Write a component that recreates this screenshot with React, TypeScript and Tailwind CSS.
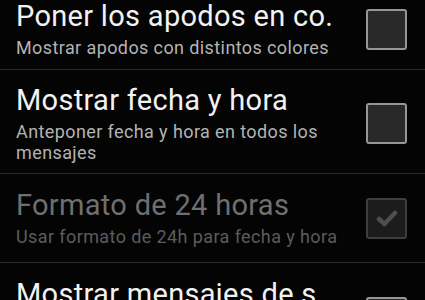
import React from "react";

type Row = {
  title: string;
  subtitle: string;
  disabled?: boolean;
  checked?: boolean;
  rowClass: string;
};

const rows: Row[] = [
  {
    title: "Poner los apodos en co.",
    subtitle: "Mostrar apodos con distintos colores",
    rowClass: "pt-0 pb-[11px]",
  },
  {
    title: "Mostrar fecha y hora",
    subtitle: "Anteponer fecha y hora en todos los mensajes",
    rowClass: "pt-[14px] pb-[10px]",
  },
  {
    title: "Formato de 24 horas",
    subtitle: "Usar formato de 24h para fecha y hora",
    disabled: true,
    checked: true,
    rowClass: "pt-[15px] pb-[15px]",
  },
  {
    title: "Mostrar mensajes de s.",
    subtitle: "Mostrar mensajes del sistema como entradas y salidas",
    rowClass: "pt-[15px] pb-[15px]",
  },
];

function Checkbox({ disabled, checked }: { disabled?: boolean; checked?: boolean }) {
  return (
    <div
      className={
        "w-[41px] h-[41px] shrink-0 rounded-[3px] border-2 flex items-center justify-center " +
        (disabled
          ? "border-[#3e3e3e] bg-[#1c1c1c]"
          : "border-[#969696] bg-[#292929]")
      }
    >
      {checked && (
        <svg width="26" height="26" viewBox="0 0 26 26">
          <path
            d="M5 14 L10.5 19 L21 8"
            fill="none"
            stroke="#4e4e4e"
            strokeWidth="4.5"
            strokeLinecap="round"
            strokeLinejoin="round"
          />
        </svg>
      )}
    </div>
  );
}

export default function App() {
  return (
    <div
      className="w-[425px] h-[300px] overflow-hidden bg-[#040404]"
      style={{ fontFamily: "Roboto, 'Noto Sans', sans-serif" }}
    >
      {rows.map((r, i) => (
        <div key={i} className={i > 0 ? "border-t border-[#2a2a2a]" : ""}>
          <div className={"flex items-center pl-[16px] pr-[18px] " + r.rowClass}>
            <div className="flex-1 min-w-0 pr-[14px]">
              <div
                className={
                  "text-[29px] leading-[32px] tracking-[0.3px] whitespace-nowrap " +
                  (r.disabled ? "text-[#6f6f6f]" : "text-[#f2f2f2]")
                }
              >
                {r.title}
              </div>
              <div
                className={
                  "mt-[5px] text-[18px] leading-[21px] tracking-[0.4px] " +
                  (r.disabled ? "text-[#5c5c5c]" : "text-[#b3b3b3]")
                }
              >
                {r.subtitle}
              </div>
            </div>
            <Checkbox disabled={r.disabled} checked={r.checked} />
          </div>
        </div>
      ))}
    </div>
  );
}
